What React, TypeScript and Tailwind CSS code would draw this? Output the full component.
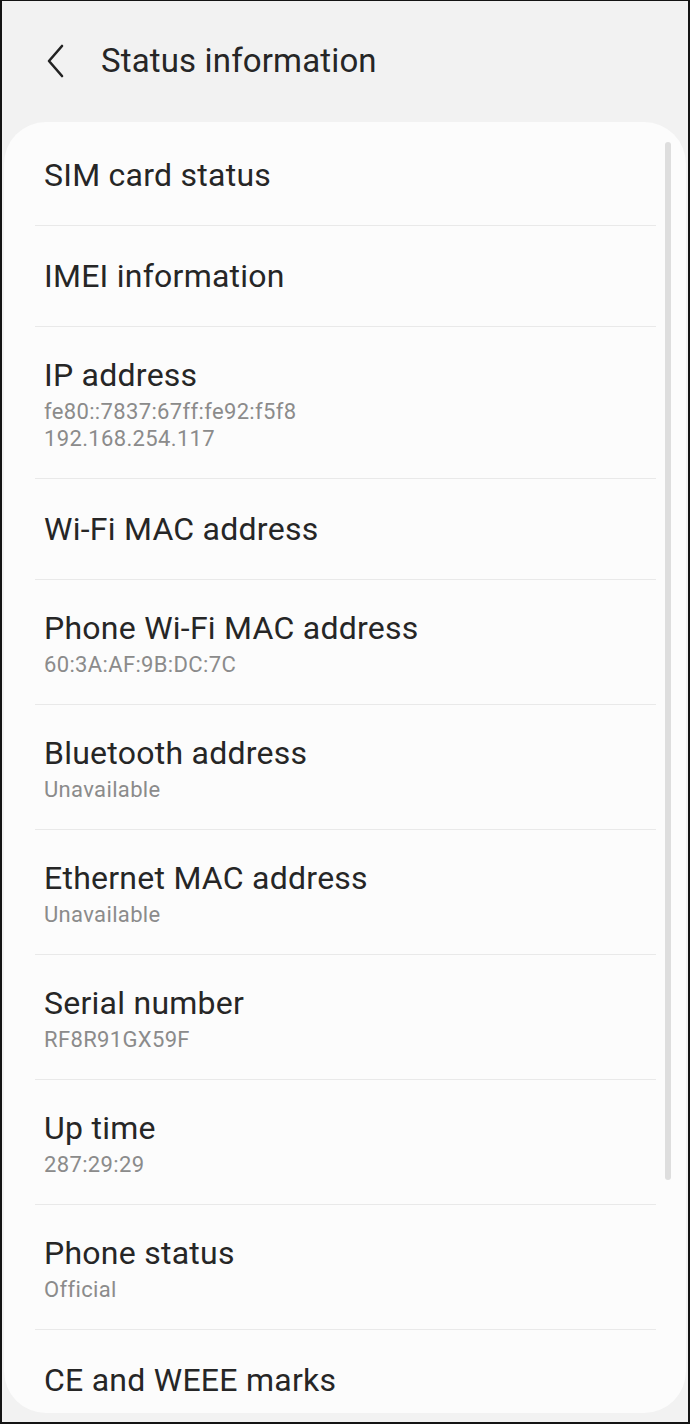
import React from 'react';

type Item = { title: string; sub?: string[] };

const items: Item[] = [
  { title: 'SIM card status' },
  { title: 'IMEI information' },
  { title: 'IP address', sub: ['fe80::7837:67ff:fe92:f5f8', '192.168.254.117'] },
  { title: 'Wi-Fi MAC address' },
  { title: 'Phone Wi-Fi MAC address', sub: ['60:3A:AF:9B:DC:7C'] },
  { title: 'Bluetooth address', sub: ['Unavailable'] },
  { title: 'Ethernet MAC address', sub: ['Unavailable'] },
  { title: 'Serial number', sub: ['RF8R91GX59F'] },
  { title: 'Up time', sub: ['287:29:29'] },
  { title: 'Phone status', sub: ['Official'] },
  { title: 'CE and WEEE marks' },
];

export default function App() {
  return (
    <div
      className="w-[690px] h-[1424px] overflow-hidden bg-[#f2f2f2] border-2 border-t border-[#141414] flex flex-col"
      style={{ fontFamily: 'Roboto, "Noto Sans", sans-serif' }}
    >
      {/* Header */}
      <div className="h-[121px] shrink-0 flex items-start pt-[38px]">
        <button className="ml-[37px] w-[32px] h-[44px] flex items-center justify-center text-[#222]">
          <svg width="22" height="36" viewBox="0 0 22 36" fill="none" stroke="currentColor" strokeWidth={2.6} strokeLinecap="round" strokeLinejoin="round">
            <path d="M18 3 L5 18 L18 33" />
          </svg>
        </button>
        <h1 className="ml-[30px] text-[33px] leading-[44px] text-[#262626] tracking-[0.15px]">Status information</h1>
      </div>

      {/* Card */}
      <div className="relative flex-1 mx-[2px] mb-[9px] bg-[#fcfcfc] rounded-[42px] overflow-hidden pl-[31px] pr-[30px] pt-[3px]">
        {items.map((item, i) => (
          <div
            key={item.title}
            className={`pl-[9px] ${item.sub ? 'pt-[30px] pb-[26px]' : 'py-[32px]'} ${
              i < items.length - 1 ? 'border-b border-[#e9e9e9]' : ''
            }`}
          >
            <div className="text-[32px] leading-[36px] text-[#262626] tracking-[0.25px]">{item.title}</div>
            {item.sub && (
              <div className="mt-[5px]">
                {item.sub.map((s) => (
                  <div key={s} className="text-[22px] leading-[27px] text-[#8b8b8b] tracking-[0.35px]">
                    {s}
                  </div>
                ))}
              </div>
            )}
          </div>
        ))}

        {/* Scrollbar */}
        <div className="absolute left-[661px] top-[20px] w-[6px] h-[1038px] rounded-full bg-[#dedede]" />
      </div>
    </div>
  );
}
